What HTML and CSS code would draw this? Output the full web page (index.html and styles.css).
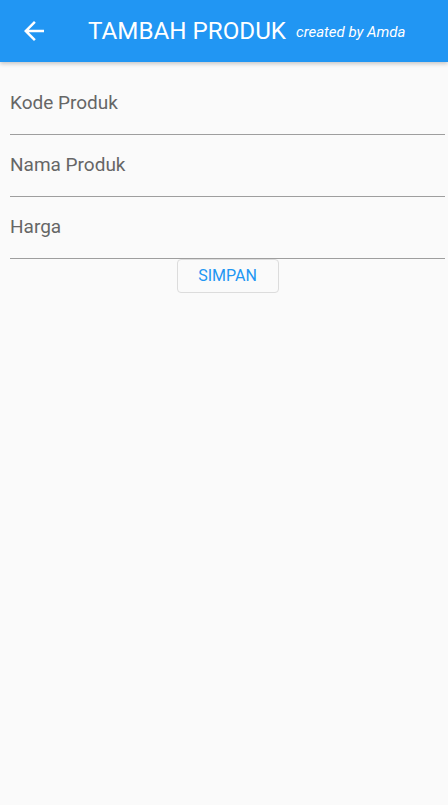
FILE: index.html
```html
<!DOCTYPE html>
<html>
<head>
<meta charset="utf-8">
<link rel="stylesheet" href="styles.css">
</head>
<body>
<header class="appbar">
  <svg class="back" width="30" height="30" viewBox="0 0 24 24"><path d="M20 11H7.83l5.59-5.59L12 4l-8 8 8 8 1.41-1.41L7.83 13H20v-2z" fill="#fff"/></svg>
  <h1 class="title">TAMBAH PRODUK</h1>
  <span class="credit">created by Amda</span>
</header>
<main class="form">
  <div class="field"><span class="label">Kode Produk</span></div>
  <div class="field"><span class="label">Nama Produk</span></div>
  <div class="field"><span class="label">Harga</span></div>
  <div class="actions"><button class="btn">SIMPAN</button></div>
</main>
</body>
</html>
```
FILE: styles.css
```css
html, body {
  margin: 0;
  padding: 0;
  background: #fafafa;
  font-family: Roboto, "Noto Sans", sans-serif;
  width: 448px;
  height: 805px;
  overflow: hidden;
}
.appbar {
  height: 62px;
  background: #2196f3;
  display: flex;
  align-items: center;
  box-shadow: 0 2px 4px rgba(0,0,0,0.2);
  color: #fff;
  position: relative;
  z-index: 1;
}
.back {
  margin-left: 19px;
  width: 30px;
  height: 30px;
}
.title {
  margin: 0 0 0 39px;
  font-size: 24.2px;
  font-weight: 400;
  letter-spacing: 0;
}
.credit {
  margin-left: 10px;
  font-size: 15px;
  font-style: italic;
  padding-top: 1px;
}
.form {
  padding: 11px 3px 0 10px;
}
.field {
  height: 61px;
  border-bottom: 1px solid #9e9e9e;
  display: flex;
  align-items: center;
}
.label {
  font-size: 19px;
  color: #666;
  padding-bottom: 2px;
}
.actions {
  display: flex;
  justify-content: center;
}
.btn {
  margin-top: 0;
  width: 102px;
  height: 34px;
  border: 1px solid #dcdcdc;
  border-radius: 4px;
  background: #fafafa;
  color: #2196f3;
  font-family: Roboto, sans-serif;
  font-size: 16px;
  padding: 0 0 2px 0;
}
```
